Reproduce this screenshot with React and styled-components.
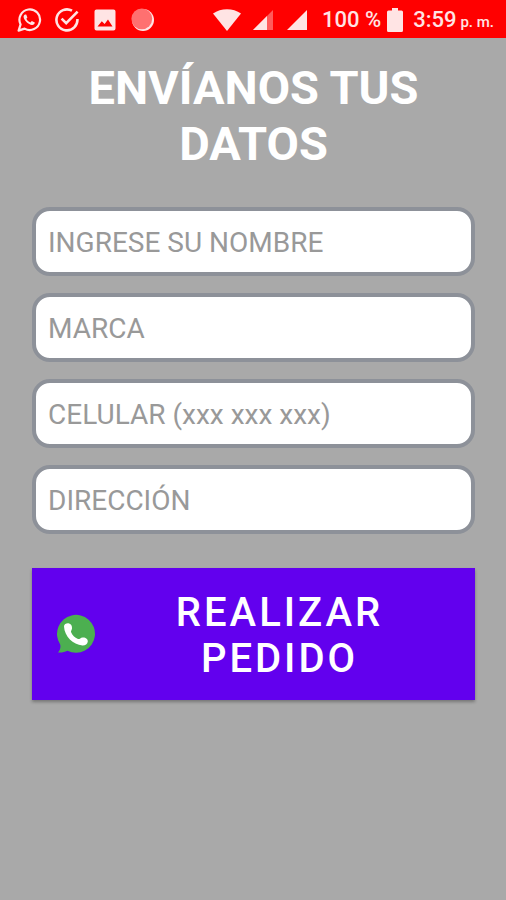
import styled, { createGlobalStyle } from 'styled-components';

const GlobalStyle = createGlobalStyle`
  * {
    box-sizing: border-box;
  }

  body {
    margin: 0;
    background: #a9a9a9;
    font-family: Roboto, 'Liberation Sans', sans-serif;
  }
`

const Screen = styled.div`
  display: flex;
  flex-direction: column;
  min-height: 100vh;
  background: #a9a9a9;
`

const StatusBar = styled.header`
  display: flex;
  align-items: center;
  justify-content: space-between;
  height: 38px;
  padding: 2px 12px 0 16px;
  background: #ff0000;
  color: #ffe4e4;
`

const Notifications = styled.div`
  display: flex;
  align-items: center;
  gap: 12px;
`

const SystemIcons = styled.div`
  display: flex;
  align-items: center;
`

const Icon = styled.svg`
  display: block;
  flex: none;
  width: ${props => props.$width}px;
  height: ${props => props.$height}px;
  margin-right: ${props => props.$gap || 0}px;
  fill: currentColor;
`

const StatusText = styled.span`
  margin-right: ${props => props.$gap || 0}px;
  font-size: 22px;
  font-weight: 500;
  line-height: 26px;
  white-space: nowrap;
`

const Meridiem = styled.small`
  margin-left: 4px;
  font-size: 15px;
  line-height: 15px;
`

const Content = styled.main`
  display: flex;
  flex-direction: column;
  padding: 22px 31px 32px 32px;
`

const Title = styled.h1`
  margin: 0 0 35px;
  color: #ffffff;
  font-size: 47px;
  font-weight: 700;
  line-height: 56px;
  text-align: center;
`

const Form = styled.form`
  display: flex;
  flex-direction: column;
  gap: 17px;
`

const Field = styled.input`
  width: 100%;
  height: 69px;
  padding: 2px 12px 0;
  border: 4px solid #8d9199;
  border-radius: 18px;
  outline: none;
  background: #ffffff;
  color: #333333;
  font-family: inherit;
  font-size: 28px;

  &::placeholder {
    color: #999999;
    opacity: 1;
  }
`

const OrderButton = styled.button`
  display: flex;
  align-items: center;
  gap: 12px;
  margin-top: 17px;
  padding: 20px 24px;
  border: 0;
  background: #6200ee;
  box-shadow: 0 2px 3px rgba(0, 0, 0, 0.3);
  color: #ffffff;
  font-family: inherit;
  font-size: 40px;
  font-weight: 500;
  line-height: 46px;
  letter-spacing: 3px;
  cursor: pointer;
`

const ButtonLabel = styled.span`
  flex: 1;
  padding-top: 2px;
  margin-bottom: -2px;
  text-align: center;
`

const fields = [
  { name: 'nombre', type: 'text', label: 'INGRESE SU NOMBRE' },
  { name: 'marca', type: 'text', label: 'MARCA' },
  { name: 'celular', type: 'tel', label: 'CELULAR (xxx xxx xxx)' },
  { name: 'direccion', type: 'text', label: 'DIRECCIÓN' },
]

const handset = 'M8 12.5C8 9.8 10.5 9 12.5 9.2C15 9.6 16.3 12 16 14.4C15.8 16 14.8 16.6 15 18C16.2 21 18.8 23.8 22 25C23.6 25.4 24.4 23.6 26.6 23.4C29.8 23.2 32 25 31.8 27.4C31.5 30 29 31.6 26.4 31.4C17 30.6 8.6 22.5 8 12.5Z'

const App = () => {
  return (
    <>
      <GlobalStyle />
      <Screen>
        <StatusBar>
          <Notifications>
            <Icon $width={26} $height={26} viewBox='0 0 26 26' aria-hidden='true'>
              <path d='M2.6 23.6L4.6 17.4A10.3 10.3 0 1 1 8.6 21.6Z' fill='none' stroke='currentColor' strokeWidth='2.2' strokeLinejoin='round' />
              <path d='M9.2 7.4C8.2 7.6 7.4 8.8 7.6 10C8.2 13.8 12.4 17.6 16 18C17.4 18.2 18.8 17 18.8 15.6L15.8 14L14.4 15.6C12.4 14.8 11.2 13.4 10.4 11.8L11.4 10.4L10.2 7.4Z' />
            </Icon>
            <Icon $width={26} $height={26} viewBox='0 0 26 26' aria-hidden='true'>
              <path d='M18 3.7A10.5 10.5 0 1 0 23.4 12M7.6 11.6L12.2 16.2L23.6 4.6' fill='none' stroke='currentColor' strokeWidth='2.6' />
            </Icon>
            <Icon $width={26} $height={26} viewBox='0 0 26 26' aria-hidden='true'>
              <path d='M4.5 2.5H21.5A2 2 0 0 1 23.5 4.5V21.5A2 2 0 0 1 21.5 23.5H4.5A2 2 0 0 1 2.5 21.5V4.5A2 2 0 0 1 4.5 2.5ZM5.5 19.5H20.5L16 12.6L12.6 17L9.8 14.2Z' fillRule='evenodd' />
            </Icon>
            <Icon $width={26} $height={26} viewBox='0 0 26 26' aria-hidden='true'>
              <circle cx='13' cy='13' r='11' />
              <circle cx='11.8' cy='11.8' r='10.4' fill='#ff7070' />
            </Icon>
          </Notifications>
          <SystemIcons>
            <Icon $width={28} $height={22} $gap={12} viewBox='0 0 28 22' aria-hidden='true'>
              <path d='M0 4.6C8 -1.2 20 -1.2 28 4.6L14 22Z' />
            </Icon>
            <Icon $width={20} $height={20} $gap={14} viewBox='0 0 20 20' aria-hidden='true'>
              <path d='M0 20L20 0V20Z' opacity='0.4' />
              <path d='M0 20L14 6V20Z' />
            </Icon>
            <Icon $width={20} $height={20} $gap={15} viewBox='0 0 20 20' aria-hidden='true'>
              <path d='M0 20L20 0V20Z' />
            </Icon>
            <StatusText $gap={6}>100 %</StatusText>
            <Icon $width={16} $height={24} $gap={10} viewBox='0 0 16 24' aria-hidden='true'>
              <path d='M5 0H11V2.5H14.5A1.5 1.5 0 0 1 16 4V22.5A1.5 1.5 0 0 1 14.5 24H1.5A1.5 1.5 0 0 1 0 22.5V4A1.5 1.5 0 0 1 1.5 2.5H5Z' />
            </Icon>
            <StatusText>
              3:59<Meridiem>p. m.</Meridiem>
            </StatusText>
          </SystemIcons>
        </StatusBar>
        <Content>
          <Title>ENVÍANOS TUS DATOS</Title>
          <Form onSubmit={e => e.preventDefault()}>
            {fields.map(field => (
              <Field
                key={field.name}
                name={field.name}
                type={field.type}
                placeholder={field.label}
                aria-label={field.label}
              />
            ))}
            <OrderButton type='submit'>
              <Icon $width={40} $height={40} viewBox='0 0 40 40' aria-hidden='true'>
                <path d='M2 38.4C4.4 36 4.8 33 4.2 30.4A19 19 0 1 1 11.4 36.8C8.4 38.2 5 39 2 38.4Z' fill='#4caf50' />
                <path d={handset} fill='#ffffff' />
              </Icon>
              <ButtonLabel>REALIZAR PEDIDO</ButtonLabel>
            </OrderButton>
          </Form>
        </Content>
      </Screen>
    </>
  )
}

export default App;
